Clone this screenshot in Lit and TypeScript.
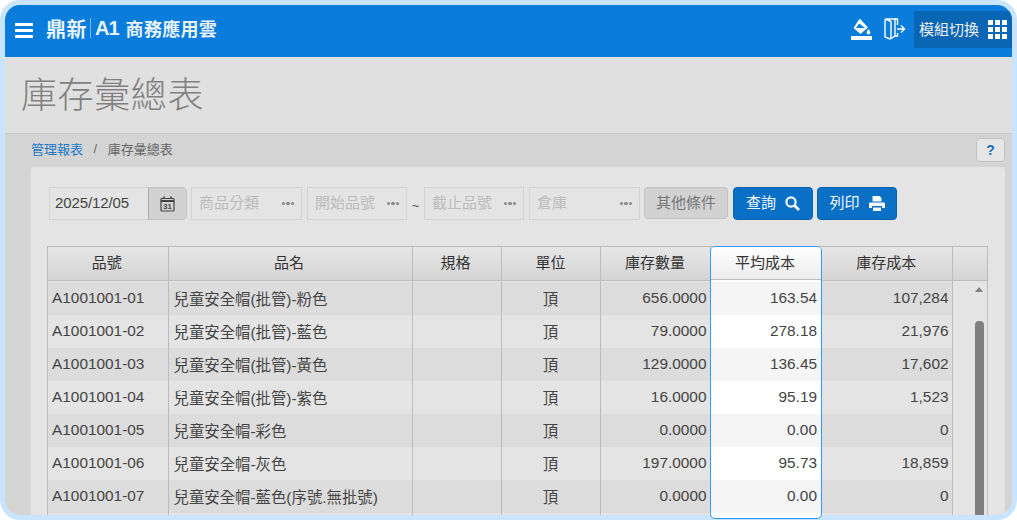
import { LitElement, html, css } from "lit";
import { customElement } from "lit/decorators.js";

interface Row { no: string; name: string; qty: string; avg: string; cost: string; }
const rows: Row[] = [
  { no: "A1001001-01", name: "兒童安全帽(批管)-粉色", qty: "656.0000", avg: "163.54", cost: "107,284" },
  { no: "A1001001-02", name: "兒童安全帽(批管)-藍色", qty: "79.0000", avg: "278.18", cost: "21,976" },
  { no: "A1001001-03", name: "兒童安全帽(批管)-黃色", qty: "129.0000", avg: "136.45", cost: "17,602" },
  { no: "A1001001-04", name: "兒童安全帽(批管)-紫色", qty: "16.0000", avg: "95.19", cost: "1,523" },
  { no: "A1001001-05", name: "兒童安全帽-彩色", qty: "0.0000", avg: "0.00", cost: "0" },
  { no: "A1001001-06", name: "兒童安全帽-灰色", qty: "197.0000", avg: "95.73", cost: "18,859" },
  { no: "A1001001-07", name: "兒童安全帽-藍色(序號.無批號)", qty: "0.0000", avg: "0.00", cost: "0" },
  { no: "", name: "", qty: "", avg: "", cost: "" },
];

@customElement("app-root")
export class AppRoot extends LitElement {
  static styles = css`
    :host { display: block; position: relative; width: 1017px; height: 520px; overflow: hidden; background: #fff; font-family: "Liberation Sans", "Noto Sans CJK TC", sans-serif; }
    .frame { box-sizing: border-box; width: 1017px; height: 520px; border: 5px solid #c8e4ff; border-radius: 20px; overflow: hidden; display: flex; flex-direction: column; background: #d4d4d4; }
    .top { height: 52px; flex: none; background: #0a7cdb; display: flex; align-items: center; color: #fff; }
    .burger { width: 18px; margin: 0 0 2px 10px; display: flex; flex-direction: column; gap: 3px; }
    .burger i { display: block; height: 3px; background: #fff; }
    .logo { display: flex; align-items: center; margin: 0 0 6px 13px; color: #e8f3fc; font-weight: 700; }
    .logo .a { font-size: 20px; letter-spacing: .5px; }
    .logo .sep { width: 1px; height: 20px; background: #7db8ea; margin: 0 4px 0 3px; }
    .logo .b { font-size: 20px; letter-spacing: -1px; margin-right: 7px; }
    .logo .c { font-size: 18px; letter-spacing: .3px; }
    .spacer { flex: 1; }
    .ico { display: block; flex: none; margin-bottom: 4px; }
    .paint { margin-right: 12px; }
    .door { margin-right: 8px; }
    .mod { height: 37px; width: 98px; display: flex; align-items: center; background: #0966b5; box-sizing: border-box; padding: 0 0 0 5px; font-size: 15px; color: #f0f0f0; align-self: flex-start; margin-top: 6px; }
    .mod span { width: 69px; margin-bottom: 2px; }
    .grid9 { display: grid; grid-template-columns: repeat(3, 5px); grid-template-rows: repeat(3, 5px); gap: 2px; }
    .grid9 i { background: #fff; }
    .title { height: 76px; flex: none; box-sizing: border-box; background: #e0e0e0; padding-left: 16px; font-size: 36px; line-height: 78px; color: #808080; font-weight: 300; letter-spacing: .6px; }
    .body { flex: 1; min-height: 0; border-top: 1px solid #c8c8c8; display: flex; flex-direction: column; }
    .crumb { height: 33px; box-sizing: border-box; flex: none; display: flex; align-items: center; padding: 0 7px 4px 26px; font-size: 13px; color: #666; }
    .crumb a { color: #1a78c8; }
    .crumb .sl { margin: 0 10.5px; }
    .help { margin: 2px 0 0 auto; width: 29px; height: 24px; box-sizing: border-box; border: 1px solid #c2c2c2; border-radius: 4px; background: #e6e6e6; color: #1a6cc0; font-weight: 700; font-size: 14px; display: flex; align-items: center; justify-content: center; }
    .card { flex: 1; min-height: 0; margin: 0 7px 0 25px; background: #e4e4e4; border-radius: 4px 4px 0 0; border-left: 1px solid #d9d9d9; box-sizing: border-box; padding: 20px 0 0 16px; }
    .tools { display: flex; align-items: flex-start; height: 33px; }
    .date { display: flex; height: 33px; margin-left: 2px; }
    .date .v { width: 99px; box-sizing: border-box; border: 1px solid #d2d2d2; border-right: 0; font-size: 15px; letter-spacing: -.1px; color: #444; padding-left: 5px; line-height: 29px; }
    .date .b { width: 39px; box-sizing: border-box; background: #d2d2d2; border: 1px solid #c4c4c4; border-left: 1px solid #a8a8a8; border-radius: 0 5px 5px 0; display: flex; align-items: center; justify-content: center; }
    .pick { box-sizing: border-box; height: 33px; border: 1px solid #d2d2d2; display: flex; align-items: center; justify-content: space-between; padding: 0 7px 5px; color: #bbb; font-size: 15px; }
    .pick b { display: flex; gap: 1px; margin-top: 5px; }
    .pick b i { width: 3.5px; height: 3.5px; border-radius: 50%; background: #8a8a8a; display: block; }
    .w111 { width: 111px; }
    .w100 { width: 100px; }
    .m4 { margin-left: 4px; }
    .m5 { margin-left: 5px; }
    .tilde { width: 17px; text-align: center; font-size: 13px; color: #555; line-height: 38px; }
    .other { box-sizing: border-box; height: 32px; width: 84px; margin-left: 4px; padding-bottom: 3px; border: 1px solid #c4c4c4; border-radius: 4px; background: #d2d2d2; color: #777; font-size: 15px; display: flex; align-items: center; justify-content: center; }
    .btn { box-sizing: border-box; height: 33px; width: 80px; border: 1px solid #0a62ae; border-radius: 4px; background: #0a70c6; color: #f4f8fc; font-size: 15px; display: flex; align-items: center; justify-content: center; gap: 9px; }
    .btn span { margin-bottom: 4px; }
    .q { margin-left: 5px; }
    .p { margin-left: 4px; }
    .tbl { margin-top: 26px; width: 941px; border: 1px solid #bbb; border-bottom: 0; box-sizing: border-box; height: 269px; overflow: hidden; }
    table { border-collapse: collapse; table-layout: fixed; width: 940px; }
    .c1 { width: 120px; } .c2 { width: 244px; } .c3 { width: 89px; } .c4 { width: 99px; }
    .c5 { width: 110px; } .c6 { width: 111px; } .c7 { width: 131px; } .c8 { width: 36px; }
    th { height: 33px; box-sizing: border-box; padding: 0 0 3px; font-weight: 400; font-size: 15px; color: #333; background: linear-gradient(#e6e6e6, #d4d4d4); border-right: 1px solid #bbb; border-bottom: 1px solid #bbb; }
    th:nth-child(-n+3) { padding-right: 2px; }
    th:last-child { border-right: 0; }
    .gap td { height: 2px; padding: 0; font-size: 0; background: #e4e4e4; border-right: 1px solid #bbb; }
    td { height: 33px; box-sizing: border-box; padding: 0 5px 2px; font-size: 15.4px; color: #444; border-right: 1px solid #bbb; white-space: nowrap; overflow: hidden; }
    td:first-child { padding-left: 4px; }
    td.nb, th.nb { border-right: 0; }
    td.r { text-align: right; padding-right: 3px; }
    td.c { text-align: center; }
    tbody tr.odd td { background: #dcdcdc; }
    tbody tr.even td { background: #e4e4e4; }
    tbody td.sb { background: #e4e4e4 !important; border-right: 0; }
    .scroll { position: absolute; left: 975px; top: 282px; width: 9px; height: 233px; }
    .arrow { width: 0; height: 0; border-left: 4.5px solid transparent; border-right: 4.5px solid transparent; border-bottom: 5px solid #808080; margin-top: 5px; }
    .thumb { position: absolute; left: 0; top: 39px; bottom: 0; width: 9px; background: #7f7f7f; border-radius: 4px 4px 0 0; }
    .spot { position: absolute; left: 710px; top: 246px; width: 112px; height: 273px; box-sizing: border-box; border: 1px solid #2a9cff; border-radius: 5px; background: #fff; overflow: hidden; }
    .spot .h { height: 33px; box-sizing: border-box; padding: 0 2px 3px 0; border-bottom: 1px solid #bbb; background: linear-gradient(#fff, #ececec); font-size: 15px; color: #333; display: flex; align-items: center; justify-content: center; }
    .spot .g { height: 2px; }
    .spot .v { height: 33px; font-size: 15.4px; color: #444; line-height: 32px; text-align: right; padding-right: 4px; }
    .spot .v.odd { background: #f5f5f5; }
    .spot .v.even { background: #fff; }
  `;

  render() {
    return html`
      <div class="frame">
        <div class="top">
          <div class="burger"><i></i><i></i><i></i></div>
          <div class="logo"><span class="a">鼎新</span><span class="sep"></span><span class="b">A1</span><span class="c">商務應用雲</span></div>
          <div class="spacer"></div>
          <svg class="ico paint" width="21" height="21" viewBox="0 0 21 21" fill="#fff">
            <path d="M8 0.5 L9.5 0 L10.5 1.5 L17 8.5 L9.5 15 L2.5 9 Z M8.2 4.5 L5 9 L14 9 Z" fill-rule="evenodd"/>
            <path d="M17.5 10 C19 12 19.6 13 19.3 14 A1.9 1.9 0 0 1 15.6 14 C15.4 13 16.2 12 17.5 10 Z"/>
            <rect x="0" y="17" width="21" height="4"/>
          </svg>
          <svg class="ico door" width="22" height="22" viewBox="0 0 22 22" fill="none" stroke="#fff" stroke-width="1.4">
            <path d="M2 1 H11 V18 L6 21 L1 19 V2 Z M1.3 1 L7 3.5 V21"/>
            <path d="M11 1 H13.5 V7 M13.5 15 V18 H11"/>
            <path d="M13 11 H20.5 M17 7.5 L20.5 11 L17 14.5"/>
          </svg>
          <div class="mod"><span>模組切換</span><div class="grid9">${Array.from({ length: 9 }, () => html`<i></i>`)}</div></div>
        </div>
        <div class="title">庫存彙總表</div>
        <div class="body">
          <div class="crumb"><a>管理報表</a><span class="sl">/</span><span>庫存彙總表</span><div class="help">?</div></div>
          <div class="card">
            <div class="tools">
              <div class="date"><div class="v">2025/12/05</div><div class="b">
                <svg width="15" height="16" viewBox="0 0 15 16" fill="none" stroke="#444" stroke-width="1.2"><rect x="1" y="2.5" width="13" height="12.5" rx="1"/><path d="M1 5 H14" stroke-width="2"/><path d="M4 0.5 V3 M11 0.5 V3" stroke-width="1.6"/><text x="7.5" y="13" font-size="7.5" font-family="Liberation Sans" font-weight="700" fill="#444" stroke="none" text-anchor="middle">31</text></svg>
              </div></div>
              ${this.pick("商品分類", "w111 m4")}
              ${this.pick("開始品號", "w100 m5")}
              <div class="tilde">~</div>
              ${this.pick("截止品號", "w100")}
              ${this.pick("倉庫", "w111 m5")}
              <div class="other">其他條件</div>
              <div class="btn q"><span>查詢</span>
                <svg width="15" height="15" viewBox="0 0 15 15" fill="none" stroke="#f4f8fc"><circle cx="6" cy="6" r="4.6" stroke-width="2.2"/><path d="M9.5 9.5 L14 14" stroke-width="2.8"/></svg>
              </div>
              <div class="btn p"><span>列印</span>
                <svg width="16" height="15" viewBox="0 0 16 15" fill="#f4f8fc"><path d="M3.5 0 H10.5 L12.5 2 V5.5 H3.5 Z"/><path d="M1 6.5 H15 A1 1 0 0 1 16 7.5 V12 H13 V10 H3 V12 H0 V7.5 A1 1 0 0 1 1 6.5 Z"/><rect x="4" y="11.5" width="8" height="3.5"/></svg>
              </div>
            </div>
            <div class="tbl">
              <table>
                <colgroup><col class="c1"><col class="c2"><col class="c3"><col class="c4"><col class="c5"><col class="c6"><col class="c7"><col class="c8"></colgroup>
                <thead><tr><th>品號</th><th>品名</th><th>規格</th><th>單位</th><th>庫存數量</th><th class="nb"></th><th>庫存成本</th><th></th></tr></thead>
                <tbody>
                  <tr class="gap"><td></td><td></td><td></td><td></td><td></td><td class="nb"></td><td></td><td class="sb"></td></tr>
                  ${rows.map((r, i) => html`<tr class=${i % 2 ? "even" : "odd"}>
                    <td>${r.no}</td><td>${r.name}</td><td></td><td class="c">${r.no ? "頂" : ""}</td><td class="r">${r.qty}</td><td class="nb"></td><td class="r">${r.cost}</td><td class="sb"></td>
                  </tr>`)}
                </tbody>
              </table>
            </div>
          </div>
        </div>
      </div>
      <div class="scroll"><div class="arrow"></div><div class="thumb"></div></div>
      <div class="spot">
        <div class="h">平均成本</div>
        <div class="g"></div>
        ${rows.slice(0, 7).map((r, i) => html`<div class="v ${i % 2 ? "even" : "odd"}">${r.avg}</div>`)}
      </div>
    `;
  }

  pick(label: string, cls: string) {
    return html`<div class="pick ${cls}"><span>${label}</span><b><i></i><i></i><i></i></b></div>`;
  }
}
